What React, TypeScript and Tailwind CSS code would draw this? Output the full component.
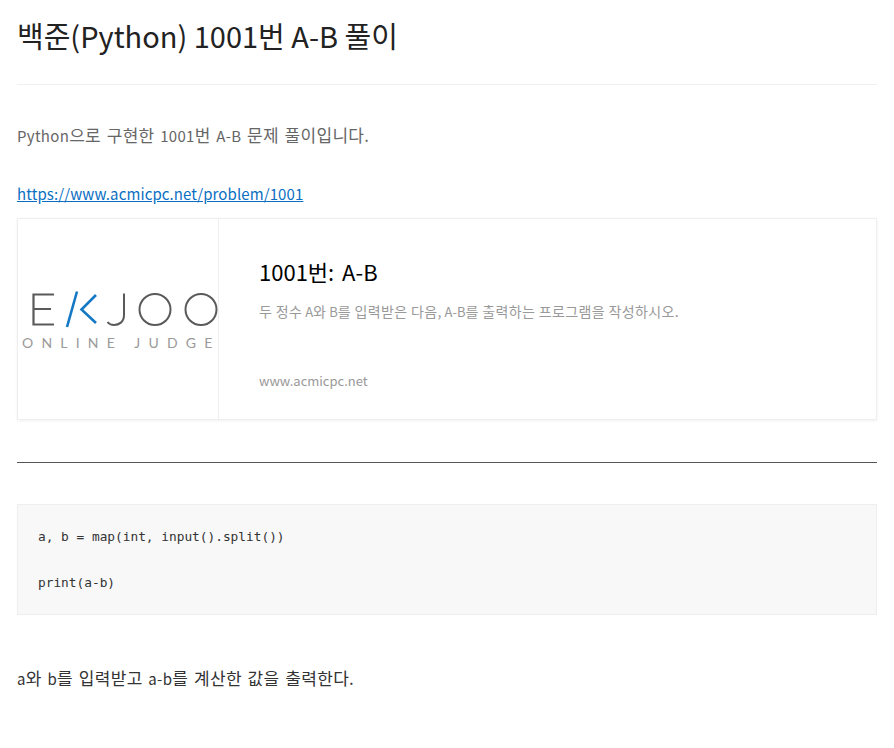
const KR = 'font-["Noto_Sans_CJK_KR","Noto_Sans",sans-serif]'

// Hangul runs sit wider than the latin in the reference, so they get their own size
function Ko({ children }: { children: string }) {
  return <span className="text-[17px]">{children}</span>
}

function KoSmall({ children }: { children: string }) {
  return <span className="text-[14px] tracking-[0.36px]">{children}</span>
}

function BojLogo() {
  return (
    <svg viewBox="0 0 200 200" className="h-full w-full overflow-visible">
      <g fill="none" stroke="#5a5a5a" strokeWidth="2.200">
        <path d="M36 75.500H15.500V105.500H36M15.500 90H33" />
      </g>
      <g fill="none" stroke="#1578c4" strokeWidth="2.600">
        <path d="M59 72.500L49 108" />
        <path d="M78 76L63.500 90.500L78 104" />
      </g>
      <g fill="none" stroke="#5a5a5a" strokeWidth="2">
        <path d="M106 74.500V96C106 103 101 106 96 106C93 106 91 105 89.500 103" />
        <circle cx="137" cy="90.500" r="15.500" />
        <circle cx="183" cy="90.500" r="15.500" />
      </g>
      <text x="4" y="128.500" fontFamily="Lato, sans-serif" fontSize="14" letterSpacing="8.200" fill="#9a9a9a">
        ONLINE JUDGE
      </text>
    </svg>
  )
}

export default function App() {
  return (
    <div className={`${KR} min-h-[748px] bg-white px-[17px] text-[15px]`}>
      <h1 className="border-b border-[#f0f0f0] pt-[12px] pb-[26px] text-[29px] leading-[46px] font-normal text-[#222]">
        백준(Python) 1001번 A-B 풀이
      </h1>

      <p className="mt-[37px] leading-[26px] tracking-[0.3px] text-[#666] [word-spacing:2px]">
        Python<Ko>으로</Ko> <Ko>구현한</Ko> 1001<Ko>번</Ko> A-B <Ko>문제</Ko> <Ko>풀이입니다.</Ko>
      </p>

      <p className="mt-[32px] leading-[26px] tracking-[0.1px]">
        <a href="#" className="text-[#0a6fc2] underline">
          https://www.acmicpc.net/problem/1001
        </a>
      </p>

      <div className="mt-[11px] flex h-[202px] border border-[#eeeeee] shadow-[0_1px_3px_rgba(0,0,0,0.06)]">
        <div className="w-[201px] shrink-0 border-r border-[#eeeeee]">
          <BojLogo />
        </div>
        <div className="flex flex-col pl-[40px]">
          <div className="mt-[34px] text-[22px] leading-[36px] text-black [word-spacing:3px]">1001번: A-B</div>
          <div className="mt-[11px] text-[13px] leading-[22px] text-[#999]">
            <KoSmall>두 정수</KoSmall> A<KoSmall>와</KoSmall> B<KoSmall>를 입력받은 다음,</KoSmall> A-B
            <KoSmall>를 출력하는 프로그램을 작성하시오.</KoSmall>
          </div>
          <div className="mt-[47px] text-[13px] leading-[22px] text-[#999]">www.acmicpc.net</div>
        </div>
      </div>

      <hr className="mt-[42px] border-t border-[#555]" />

      <div className="mt-[41px] h-[111px] border border-[#eeeeee] bg-[#f8f8f8] px-[20px] pt-[20px] font-['DejaVu_Sans_Mono',monospace] text-[12.800px] leading-[23px] text-[#333]">
        <div>a, b = map(int, input().split())</div>
        <div className="mt-[23px]">print(a-b)</div>
      </div>

      <p className="mt-[50px] leading-[26px] tracking-[0.33px] text-[#333] [word-spacing:2px]">
        a<Ko>와</Ko> b<Ko>를</Ko> <Ko>입력받고</Ko> a-b<Ko>를</Ko> <Ko>계산한</Ko> <Ko>값을</Ko> <Ko>출력한다.</Ko>
      </p>
    </div>
  )
}
